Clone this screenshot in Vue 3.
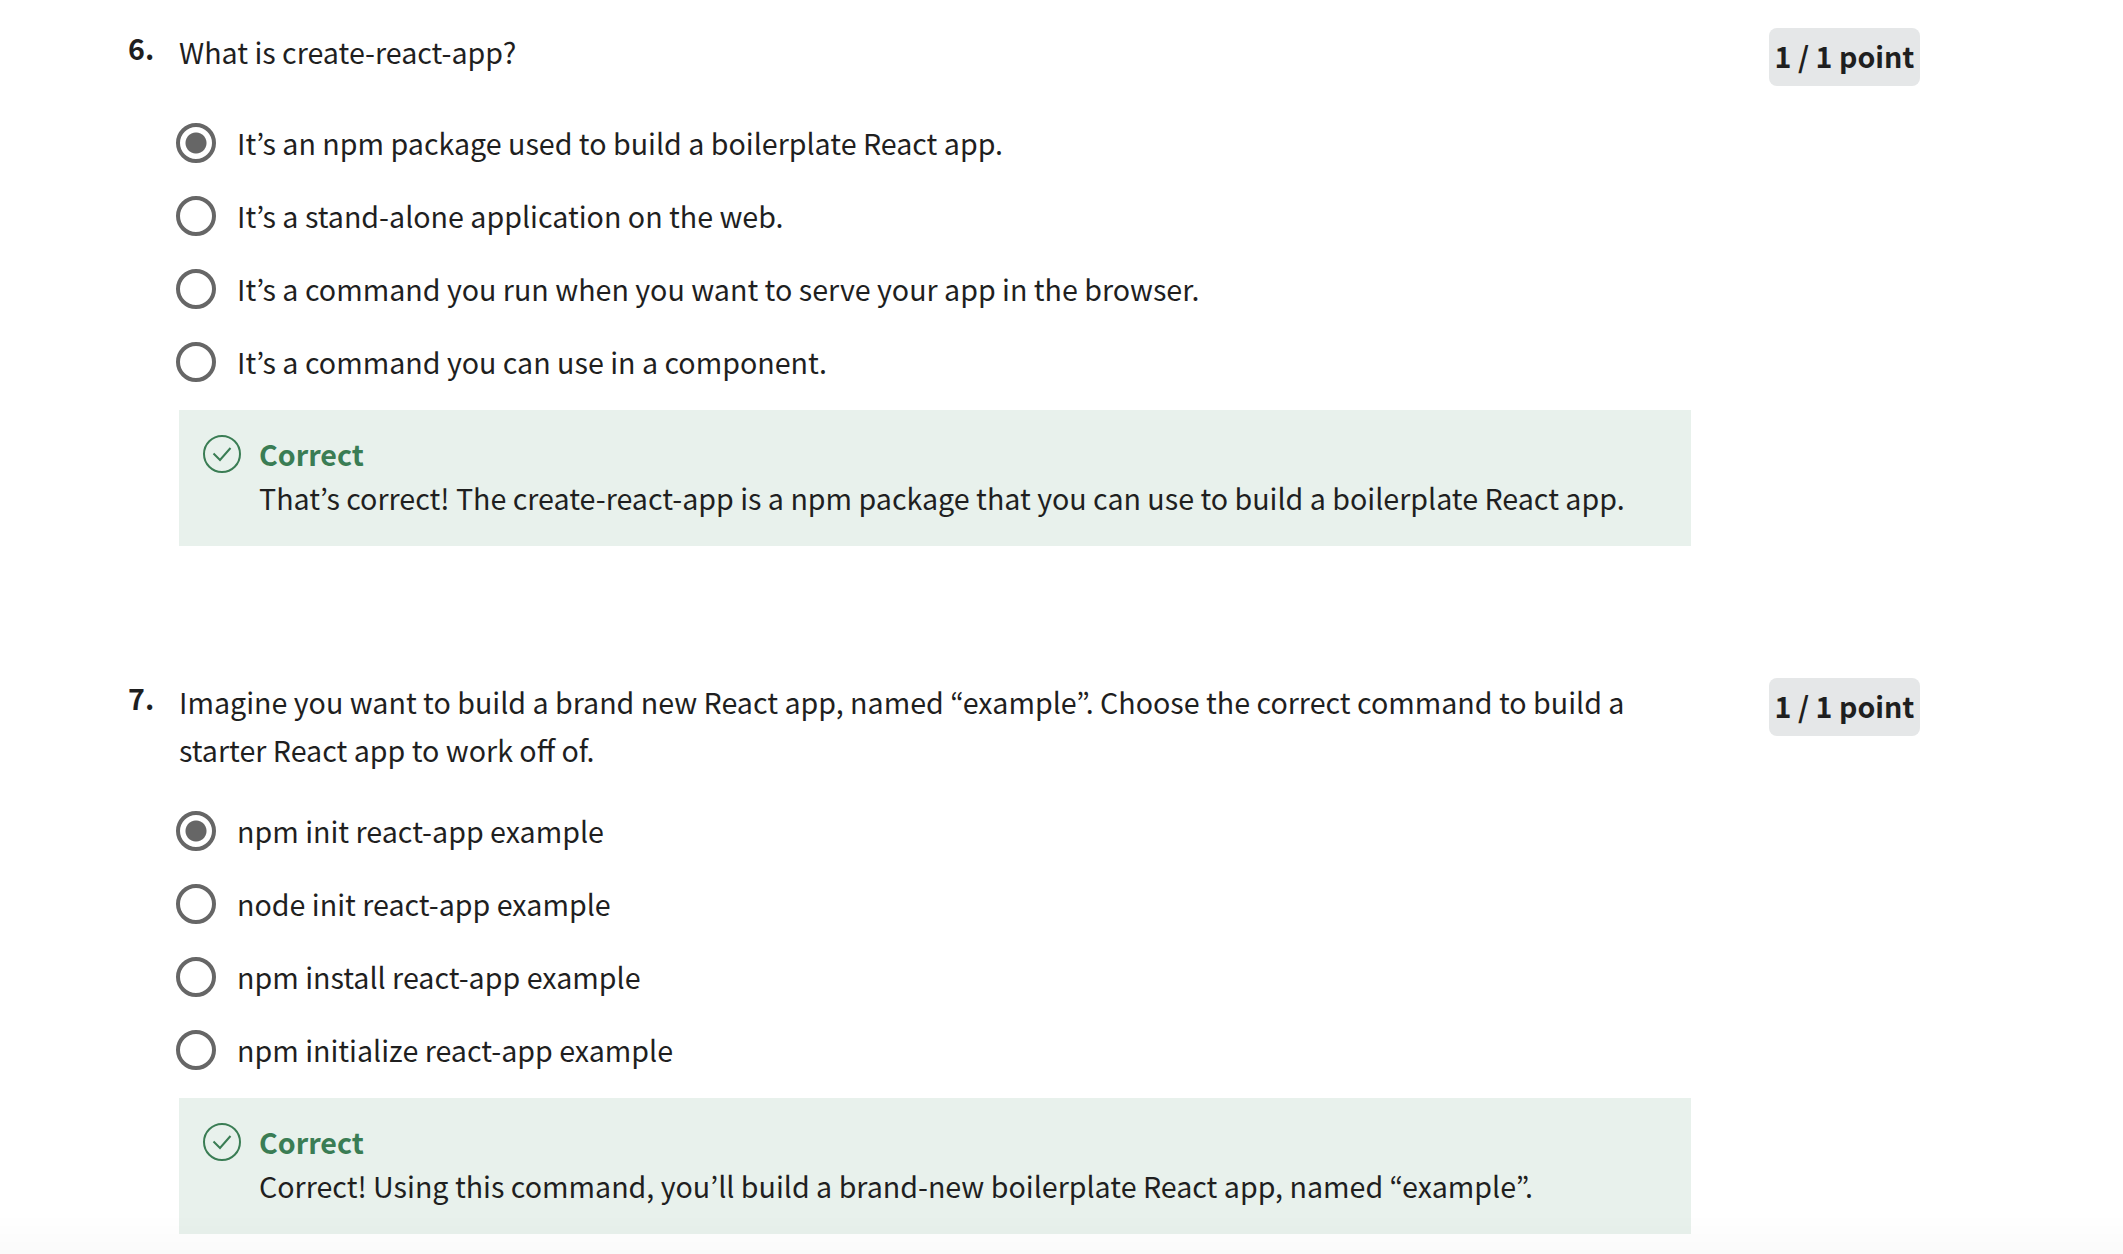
<script setup>
const questions = [
  {
    number: 6,
    prompt: 'What is create-react-app?',
    options: [
      'It’s an npm package used to build a boilerplate React app.',
      'It’s a stand-alone application on the web.',
      'It’s a command you run when you want to serve your app in the browser.',
      'It’s a command you can use in a component.',
    ],
    feedback:
      'That’s correct! The create-react-app is a npm package that you can use to build a boilerplate React app.',
  },
  {
    number: 7,
    prompt:
      'Imagine you want to build a brand new React app, named “example”. Choose the correct command to build a starter React app to work off of.',
    options: [
      'npm init react-app example',
      'node init react-app example',
      'npm install react-app example',
      'npm initialize react-app example',
    ],
    feedback:
      'Correct! Using this command, you’ll build a brand-new boilerplate React app, named “example”.',
  },
]
</script>

<template>
  <main class="quiz">
    <section v-for="q in questions" :key="q.number" class="question">
      <span class="number">{{ q.number }}.</span>
      <div class="body">
        <p :id="`prompt-${q.number}`" class="prompt">{{ q.prompt }}</p>
        <div class="options" role="radiogroup" :aria-labelledby="`prompt-${q.number}`">
          <label v-for="(option, i) in q.options" :key="option" class="option">
            <input type="radio" :name="`question-${q.number}`" :value="option" :checked="i === 0" />
            <span>{{ option }}</span>
          </label>
        </div>
        <div class="feedback">
          <svg class="check" viewBox="0 0 40 40" aria-hidden="true">
            <circle cx="20" cy="20" r="18" />
            <path d="M11.500 19.500l6.500 6.500 10.500-12" />
          </svg>
          <div>
            <strong class="verdict">Correct</strong>
            <p>{{ q.feedback }}</p>
          </div>
        </div>
      </div>
      <span class="points">1 / 1 point</span>
    </section>
    <div class="fade" aria-hidden="true"></div>
  </main>
</template>

<style>
body {
  margin: 0;
  background: #fff;
}
</style>

<style scoped>
.quiz {
  padding: 28px 203px 20px 128px;
  color: #1f1f1f;
  font-family: "Source Sans Pro", "Noto Sans CJK KR", "Noto Sans", sans-serif;
  font-size: 32px;
  font-size-adjust: 0.486;
  line-height: 48px;
}
p {
  margin: 0;
}
.question {
  display: flex;
  align-items: flex-start;
}
.question + .question {
  margin-top: 132px;
}
.number {
  flex: none;
  width: 51px;
  font-weight: 600;
  line-height: 40px;
}
.body {
  flex: 1;
}
.prompt {
  min-height: 58px;
}
.points {
  flex: none;
  box-sizing: border-box;
  width: 151px;
  margin-left: 78px;
  padding-bottom: 2px;
  border-radius: 8px;
  background: #e5e7e8;
  font-weight: 600;
  line-height: 56px;
  text-align: center;
}
.options {
  margin: 20px 0 12px;
}
.option {
  display: flex;
  align-items: center;
  height: 73px;
}
.option input {
  appearance: none;
  box-sizing: border-box;
  flex: none;
  width: 40px;
  height: 40px;
  margin: 0 21px 0 -3px;
  border: 4px solid #666;
  border-radius: 50%;
}
.option input:checked {
  background: radial-gradient(circle, #666 10px, transparent 11px);
}
.feedback {
  display: flex;
  padding: 22px 23px 26px;
  background: #e8f1ec;
  line-height: 44px;
}
.check {
  flex: none;
  width: 40px;
  height: 40px;
  margin: 2px 17px 0 0;
  fill: none;
  stroke: #3a7d54;
  stroke-width: 2;
}
.verdict {
  color: #3a7d54;
  font-weight: 600;
}
.fade {
  position: fixed;
  right: 0;
  bottom: 0;
  left: 0;
  height: 40px;
  background: linear-gradient(transparent, rgba(0, 0, 0, 0.02));
  pointer-events: none;
}
</style>
